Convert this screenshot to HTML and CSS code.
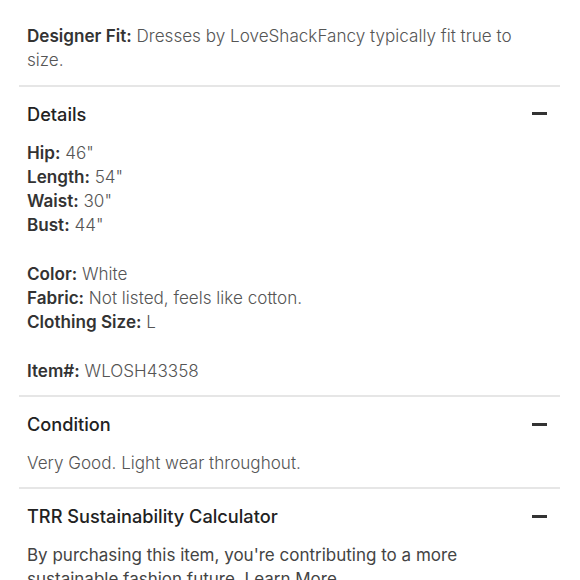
FILE: index.html
```html
<!DOCTYPE html>
<html lang="en">
<head>
<meta charset="utf-8">
<link rel="stylesheet" href="styles.css">
</head>
<body>
<div class="page">
  <section class="section first">
    <p class="text"><b>Designer Fit:</b> Dresses by LoveShackFancy typically fit true to size.</p>
  </section>
  <section class="section">
    <div class="head"><h2>Details</h2><span class="minus"></span></div>
    <div class="group">
      <p class="text"><b>Hip:</b> 46"</p>
      <p class="text"><b>Length:</b> 54"</p>
      <p class="text"><b>Waist:</b> 30"</p>
      <p class="text"><b>Bust:</b> 44"</p>
    </div>
    <div class="group">
      <p class="text"><b>Color:</b> White</p>
      <p class="text"><b>Fabric:</b> Not listed, feels like cotton.</p>
      <p class="text"><b>Clothing Size:</b> L</p>
    </div>
    <div class="group">
      <p class="text"><b>Item#:</b> WLOSH43358</p>
    </div>
  </section>
  <section class="section">
    <div class="head"><h2>Condition</h2><span class="minus"></span></div>
    <p class="text">Very Good. Light wear throughout.</p>
  </section>
  <section class="section last">
    <div class="head"><h2>TRR Sustainability Calculator</h2><span class="minus"></span></div>
    <p class="text large">By purchasing this item, you're contributing to a more sustainable fashion future. Learn More</p>
  </section>
</div>
</body>
</html>
```
FILE: styles.css
```css
html, body {
  margin: 0;
  padding: 0;
  background: #fff;
}
body {
  font-family: Inter, "Noto Sans", sans-serif;
  color: #555;
  overflow: hidden;
  height: 580px;
}
.page {
  margin: 0 20px 0 19px;
}
.section {
  padding: 15px 13px 12px 8px;
  border-bottom: 2px solid #e6e6e6;
}
.section.first {
  padding-top: 24px;
}
.section.last {
  border-bottom: none;
}
.head {
  display: flex;
  align-items: center;
  justify-content: space-between;
  margin-bottom: 15px;
}
h2 {
  margin: 0;
  font-size: 18.2px;
  line-height: 24px;
  font-weight: 500;
  color: #222;
}
.minus {
  width: 15px;
  height: 3px;
  background: #333;
}
.text {
  margin: 0;
  font-size: 17.1px;
  line-height: 24.25px;
  font-weight: 300;
  color: #555;
}
.text b {
  font-weight: 600;
  color: #333;
}
.text.large {
  font-size: 17px;
  line-height: 24px;
  font-weight: 400;
  color: #444;
}
.group + .group {
  margin-top: 24.25px;
}
```
